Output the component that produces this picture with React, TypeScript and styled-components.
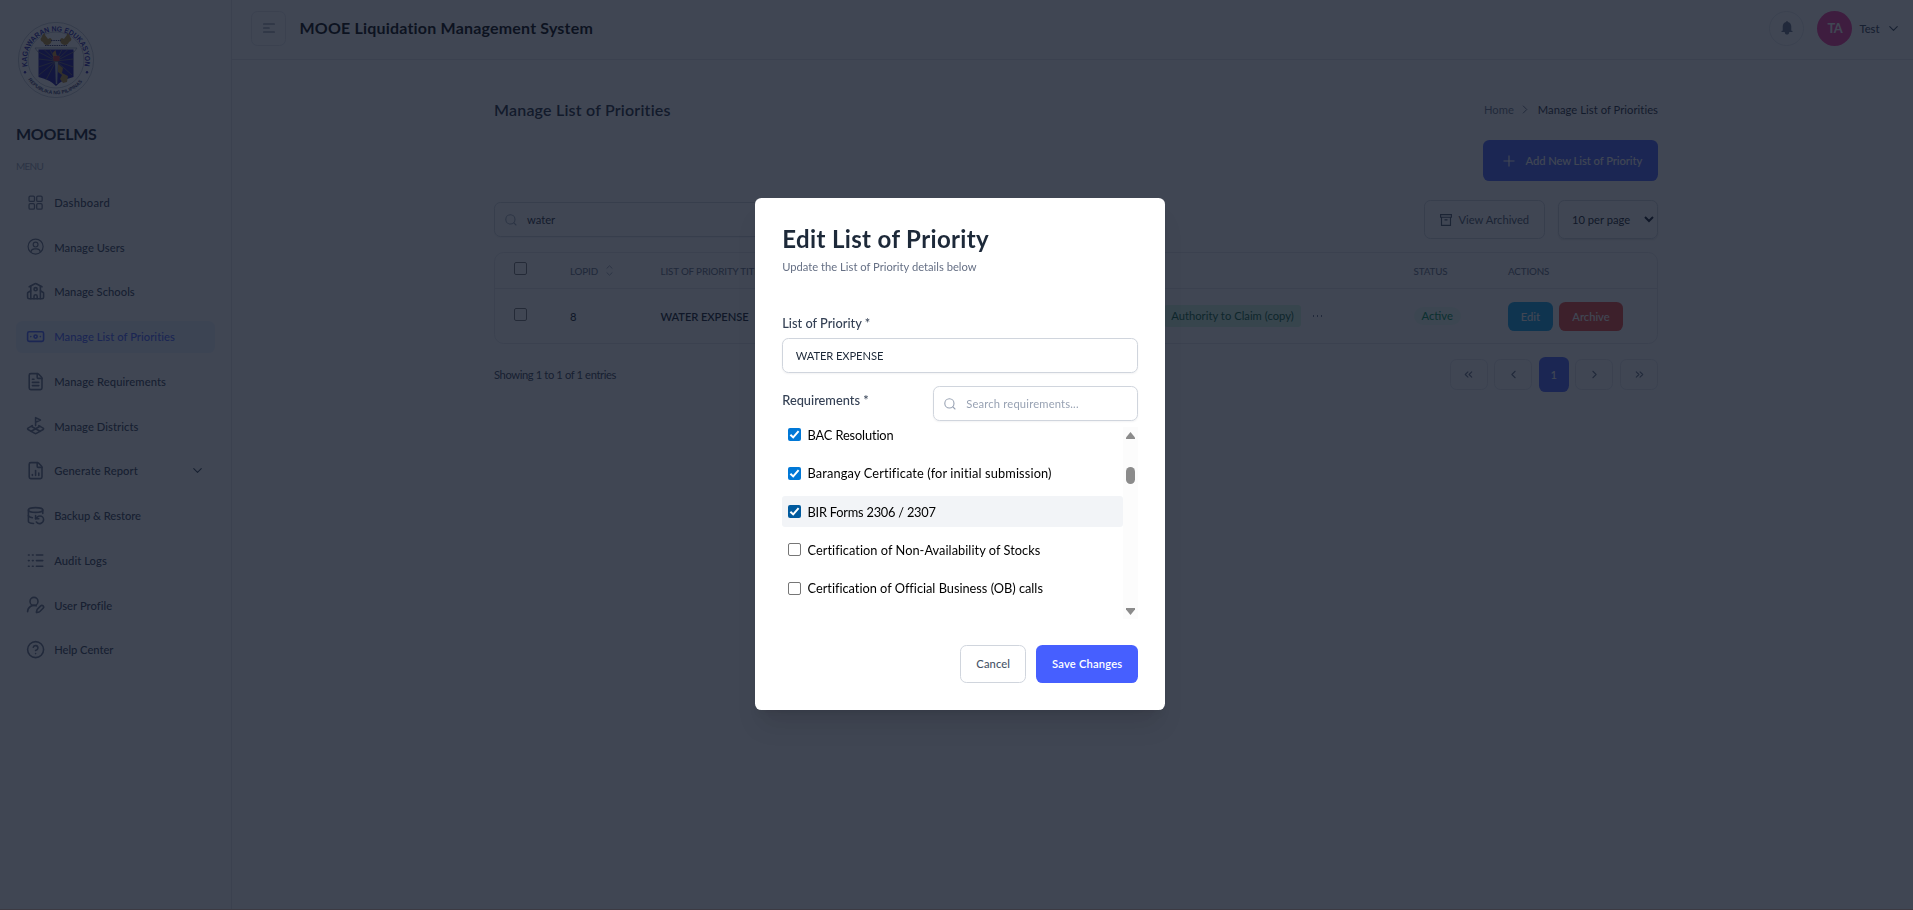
import React from 'react';
import styled, { createGlobalStyle } from 'styled-components';
import {
  Banknote, ChevronDown, ChevronLeft, ChevronRight, ChevronsLeft, ChevronsRight, CircleHelp,
  DatabaseBackup, FileChartColumn, FileText, LandPlot, Logs, School, UserRoundPen,
} from 'lucide-react';

const Global = createGlobalStyle`
  *, *::before, *::after { box-sizing: border-box; }
  body { margin: 0; background: #fff; font-family: Lato, "Liberation Sans", sans-serif; overflow: hidden; }
  h1, h2, p { margin: 0; }
  button { font-family: inherit; cursor: pointer; }
  svg { display: block; flex-shrink: 0; }
`;

const ink = '#101828';
const line = '#e4e7ec';

const Shell = styled.div`
  display: flex;
  height: 910px;
  width: 100%;
`;

/* Sidebar */
const Sidebar = styled.aside`
  width: 232px;
  flex-shrink: 0;
  border-right: 1px solid ${line};
  padding: 20px 16px 0;
`;
const Brand = styled.h2`
  margin-top: 23px;
  font-size: 16px;
  line-height: 22px;
  font-weight: 700;
  letter-spacing: -0.25px;
  color: ${ink};
`;
const MenuLabel = styled.p`
  margin: 13px 0 12.3px;
  font-size: 10px;
  line-height: 16px;
  letter-spacing: -0.75px;
  color: #98a2b3;
`;
const Nav = styled.nav`
  display: flex;
  flex-direction: column;
  gap: 12.75px;
`;
const NavItem = styled.a<{ $active?: boolean }>`
  display: flex;
  align-items: center;
  gap: 9.2px;
  width: 199px;
  height: 32px;
  padding: 0 10.5px 0 9.8px;
  border-radius: 6.4px;
  color: ${p => (p.$active ? '#465fff' : '#344054')};
  background: ${p => (p.$active ? '#ecf3ff' : 'transparent')};
  & > svg:first-child { color: ${p => (p.$active ? '#465fff' : '#667085')}; }
`;
const NavText = styled.span<{ $ls: number }>`
  flex: 1;
  font-size: 11.2px;
  font-weight: 500;
  white-space: nowrap;
  letter-spacing: ${p => p.$ls}px;
`;

/* Header */
const Main = styled.div`
  flex: 1;
  min-width: 0;
`;
const Header = styled.header`
  display: flex;
  align-items: center;
  height: 60px;
  padding: 0 12.5px 3px 19px;
  border-bottom: 1px solid ${line};
`;
const SquareButton = styled.button<{ $round?: boolean }>`
  display: grid;
  place-items: center;
  width: 35px;
  height: 35px;
  padding: 0;
  border: 1px solid ${line};
  border-radius: ${p => (p.$round ? '50%' : '6.4px')};
  background: transparent;
  color: #667085;
`;
const AppTitle = styled.h1`
  flex: 1;
  margin: 0 0 1.5px 13.5px;
  font-size: 16px;
  font-weight: 700;
  letter-spacing: 0.19px;
  color: #000;
`;
const Avatar = styled.div`
  display: grid;
  place-items: center;
  width: 35px;
  height: 35px;
  margin: 0 7px 0 13px;
  border-radius: 50%;
  background: #f6339a;
  color: #fff;
  font-size: 12.8px;
  font-weight: 700;
  letter-spacing: -0.4px;
`;
const UserName = styled.span`
  margin-right: 6px;
  font-size: 11.2px;
  font-weight: 500;
  color: #344054;
`;

/* Page content */
const Content = styled.main`
  width: 1164px;
  margin-left: 262px;
`;
const TitleRow = styled.div`
  display: flex;
  align-items: center;
  justify-content: space-between;
  height: 24px;
  margin-top: 37px;
`;
const PageTitle = styled.h2`
  font-size: 16px;
  font-weight: 600;
  letter-spacing: 0.2px;
  color: #1d2939;
`;
const Crumbs = styled.div`
  display: flex;
  align-items: center;
  font-size: 11.2px;
  color: #667085;
  svg { margin: 1px 10px 0 8px; }
`;
const Current = styled.span`
  color: #1d2939;
  letter-spacing: 0.05px;
`;
const AddRow = styled.div`
  display: flex;
  justify-content: flex-end;
  margin-top: 19px;
`;
const AddButton = styled.button`
  display: flex;
  align-items: center;
  gap: 10.5px;
  width: 175px;
  height: 41px;
  padding: 0 0 0 20px;
  border: 0;
  border-radius: 6.4px;
  background: #465fff;
  color: #fff;
  font-size: 11.2px;
  font-weight: 500;
  white-space: nowrap;
  letter-spacing: -0.06px;
`;
const Toolbar = styled.div`
  display: flex;
  align-items: center;
  height: 39px;
  margin-top: 19px;
`;
const SearchBox = styled.div<{ $w: number }>`
  display: flex;
  align-items: center;
  gap: 10.5px;
  width: ${p => p.$w}px;
  height: 35px;
  padding: 0 9.5px;
  border: 1px solid #d0d5dd;
  border-radius: 6.4px;
  font-size: 11.2px;
  color: #1d2939;
  box-shadow: 0 1px 2px rgba(16, 24, 40, 0.05);
  svg { color: #98a2b3; }
`;
const Placeholder = styled.span`
  color: #98a2b3;
  letter-spacing: 0.18px;
`;
const ArchivedButton = styled.button`
  display: flex;
  align-items: center;
  gap: 7px;
  width: 121.5px;
  height: 38.5px;
  margin-left: auto;
  padding: 0 0 0 15px;
  border: 1px solid #d0d5dd;
  border-radius: 6.4px;
  background: transparent;
  color: #475467;
  font-size: 11.2px;
`;
const PageSize = styled.div`
  display: flex;
  align-items: center;
  justify-content: space-between;
  width: 100px;
  height: 39px;
  margin-left: 13px;
  padding: 0 3px 0 13px;
  border: 1px solid #d0d5dd;
  border-radius: 6.4px;
  box-shadow: 0 1px 2px rgba(0, 0, 0, 0.12);
  font-size: 11.2px;
  color: ${ink};
`;

/* Table */
const Table = styled.section`
  margin-top: 13px;
  height: 92px;
  border: 1px solid ${line};
  border-radius: 9.6px;
`;
const Row = styled.div<{ $head?: boolean }>`
  display: grid;
  grid-template-columns: 56px 90.5px 250px 1fr 94.5px 149px;
  align-items: center;
  height: ${p => (p.$head ? 36 : 54)}px;
  padding-left: 19px;
  border-bottom: ${p => (p.$head ? `1px solid ${line}` : '0')};
  font-size: ${p => (p.$head ? 9.8 : 11.2)}px;
  font-weight: 500;
  letter-spacing: ${p => (p.$head ? -0.15 : 0)}px;
  color: ${p => (p.$head ? '#667085' : ink)};
`;
const Cell = styled.div<{ $end?: boolean; $gap?: number }>`
  display: flex;
  align-items: center;
  gap: ${p => p.$gap ?? 0}px;
  justify-content: ${p => (p.$end ? 'flex-end' : 'flex-start')};
`;
const TitleCell = styled(Cell)`
  font-weight: 600;
  letter-spacing: -0.1px;
`;
const Tick = styled.span<{ $on?: boolean; $dark?: boolean }>`
  display: grid;
  place-items: center;
  width: 13px;
  height: 13px;
  flex-shrink: 0;
  border: ${p => (p.$on ? '0' : '1px solid #767676')};
  border-radius: 2px;
  background: ${p => (p.$on ? (p.$dark ? '#005a9e' : '#0078d7') : '#fff')};
`;
const RowTick = styled(Tick)<{ $up: number }>`
  margin-bottom: ${p => p.$up}px;
`;
const Badge = styled.span`
  height: 21.5px;
  padding: 0 6.7px;
  border-radius: 3.2px;
  background: #d1fadf;
  color: #05603a;
  font-weight: 400;
  line-height: 22px;
  letter-spacing: 0.03px;
`;
const More = styled.span`
  display: flex;
  gap: 2.4px;
  width: 113px;
  padding-left: 12.5px;
  i { width: 1.4px; height: 1.2px; background: #667085; }
`;
const Status = styled.span`
  height: 18px;
  padding: 0 8px;
  border-radius: 9px;
  background: #ecfdf3;
  color: #039855;
  line-height: 18px;
`;
const Action = styled.button<{ $red?: boolean }>`
  width: ${p => (p.$red ? 64 : 45)}px;
  height: 29px;
  padding: 0;
  border: 0;
  border-radius: 6.4px;
  background: ${p => (p.$red ? '#f04438' : '#0ba5ec')};
  color: #fff;
  font-size: 11.2px;
  font-weight: 500;
`;
const Footer = styled.div`
  display: flex;
  align-items: center;
  justify-content: space-between;
  height: 35px;
  margin-top: 13px;
`;
const Showing = styled.span`
  font-size: 11.2px;
  letter-spacing: -0.39px;
  color: #344054;
`;
const Pager = styled.div`
  display: flex;
  align-items: center;
  gap: 6.6px;
`;
const PageButton = styled.button<{ $current?: boolean }>`
  display: grid;
  place-items: center;
  width: ${p => (p.$current ? 30 : 38)}px;
  height: ${p => (p.$current ? 35 : 31.5)}px;
  padding: 0;
  border: ${p => (p.$current ? '0' : `1px solid ${line}`)};
  border-radius: 6.4px;
  background: ${p => (p.$current ? '#465fff' : 'transparent')};
  color: ${p => (p.$current ? '#fff' : '#667085')};
  font-size: 11.2px;
  font-weight: 500;
`;

/* Modal */
const Overlay = styled.div`
  position: fixed;
  inset: 0;
  display: flex;
  align-items: center;
  justify-content: center;
  padding: 0 0 1px 7.5px;
  background: rgba(16, 24, 40, 0.8);
  border-bottom: 1px solid #3c3a42;
`;
const Dialog = styled.div`
  width: 410px;
  height: 512px;
  padding: 26px 27px 0;
  border-radius: 6.4px;
  background: #fff;
  box-shadow: 0 20px 25px -5px rgba(0, 0, 0, 0.1), 0 8px 10px -6px rgba(0, 0, 0, 0.1);
`;
const DialogTitle = styled.h2`
  font-size: 24px;
  line-height: 30px;
  font-weight: 700;
  letter-spacing: 0.36px;
  color: #1d2939;
`;
const DialogNote = styled.p`
  margin-top: 4.5px;
  font-size: 11.2px;
  line-height: 16px;
  color: #667085;
`;
const Label = styled.label`
  display: block;
  font-size: 12.8px;
  line-height: 19px;
  font-weight: 500;
  color: #344054;
`;
const FieldLabel = styled(Label)`
  margin-top: 39.5px;
`;
const Field = styled.div`
  height: 35px;
  margin-top: 5px;
  padding-left: 12.5px;
  border: 1px solid #d0d5dd;
  border-radius: 6.4px;
  box-shadow: 0 1px 2px rgba(16, 24, 40, 0.05);
  font-size: 11.2px;
  line-height: 33px;
  letter-spacing: -0.1px;
  color: #1d2939;
`;
const ReqHead = styled.div`
  display: flex;
  align-items: flex-start;
  justify-content: space-between;
  margin-top: 13px;
  ${Label} { margin-top: 5px; }
`;
const List = styled.div`
  display: flex;
  height: 192px;
  margin-top: 6px;
  overflow: hidden;
`;
const Options = styled.div`
  flex: 1;
  display: flex;
  flex-direction: column;
  gap: 6.4px;
  margin-top: -8px;
`;
const Option = styled.label<{ $hover?: boolean; $ls: number }>`
  display: flex;
  align-items: center;
  gap: 6.3px;
  flex: 0 0 31.9px;
  padding-left: 6px;
  border-radius: 3.2px;
  background: ${p => (p.$hover ? '#f2f4f7' : 'transparent')};
  color: #000;
  font-size: 12.8px;
  white-space: nowrap;
  letter-spacing: ${p => p.$ls}px;
`;
const ScrollTrack = styled.div`
  display: flex;
  flex-direction: column;
  align-items: center;
  width: 15px;
  padding: 5px 0 4px;
  background: #fcfcfc;
`;
const Thumb = styled.div`
  width: 9px;
  height: 17px;
  margin: 28px 0 auto;
  border-radius: 4.5px;
  background: #8b8b8b;
`;
const Buttons = styled.div`
  display: flex;
  justify-content: flex-end;
  gap: 10px;
  margin-top: 25.5px;
`;
const DialogButton = styled.button<{ $primary?: boolean }>`
  width: ${p => (p.$primary ? 102 : 66)}px;
  height: 38px;
  padding: 0;
  border: ${p => (p.$primary ? '0' : '1px solid #d0d5dd')};
  border-radius: 6.4px;
  background: ${p => (p.$primary ? '#465fff' : '#fff')};
  color: ${p => (p.$primary ? '#fff' : '#475467')};
  font-size: 11.2px;
  font-weight: ${p => (p.$primary ? 600 : 500)};
  letter-spacing: ${p => (p.$primary ? 0.18 : 0.1)}px;
`;

const Seal = () => (
  <svg width="80" height="80" viewBox="0 0 80 80">
    <defs>
      <path id="arcTop" d="M11.9 47.5A29 29 0 1 1 68.1 47.5" />
      <path id="arcBottom" d="M10.5 57A33.800 33.800 0 0 0 69.500 57" />
    </defs>
    <circle cx="40" cy="40" r="37.6" fill="none" stroke="#98a2b3" strokeWidth=".6" />
    <circle cx="40" cy="40" r="28" fill="none" stroke="#98a2b3" strokeWidth=".6" />
    <text fontFamily="Liberation Sans" fontWeight="700" fontSize="7.4" fill="#2b1fa8">
      <textPath href="#arcTop" startOffset="1" textLength="103" lengthAdjust="spacingAndGlyphs">KAGAWARAN NG EDUKASYON</textPath>
    </text>
    <text fontFamily="Liberation Sans" fontWeight="700" fontSize="5" fill="#33336b">
      <textPath href="#arcBottom" startOffset="3" textLength="63" lengthAdjust="spacingAndGlyphs">REPUBLIKA NG PILIPINAS</textPath>
    </text>
    <circle cx="9" cy="52.3" r="1.2" fill="#2b1fa8" />
    <circle cx="71" cy="52.3" r="1.2" fill="#2b1fa8" />
    <path d="M29 13c-1 2 2 4 3 6l2-1c3 1 2 4 0 6-3 2-6 1-7-2-3-1-3-4-1-5 0-2 1-3 3-4zM51 13c1 2-2 4-3 6l-2-1c-3 1-2 4 0 6 3 2 6 1 7-2 3-1 3-4 1-5 0-2-1-3-3-4z" fill="#b58a35" />
    <path d="M29 25.500h22M35 20.500h10" stroke="#33336b" strokeWidth="1.2" strokeDasharray="1.5 .8" />
    <path d="M19 28h42l-3 4H22z" fill="none" stroke="#98a2b3" strokeWidth=".9" />
    <path d="M22.500 29.500h35V57q-12 3-17.500 9Q34.500 60 22.500 57z" fill="#1c1399" />
    <path d="M40 41L22.500 32M40 41L28 29.500M40 41L34 29.500M40 41L46 29.500M40 41L52 29.500M40 41L57.500 32M40 41L22.500 39M40 41L22.500 47M40 41L23 55M40 41L30 60M40 41L57.500 39M40 41L57.500 47M40 41L56 55" stroke="#8a8460" strokeWidth=".6" />
    <path d="M39 42h3l-.8 22h-1.400z" fill="#aab2c5" />
    <path d="M42 44l5 4-1 5 6 3-1 6-4 1-3-4 2-4-4-3z" fill="#b58a35" />
    <path d="M36.500 33l3-3 1 5 3 2-1 3-5-1z" fill="#c98a2e" />
    <path d="M37.500 36h6v5h-6z" fill="#c42b2b" />
  </svg>
);

const GridIcon = () => (
  <svg width="19.2" height="19.2" viewBox="0 0 24 24" fill="none" stroke="currentColor" strokeWidth="1.6">
    <rect x="3.8" y="3.8" width="6.800" height="6.800" rx="1.500" /><rect x="13.400" y="3.8" width="6.800" height="6.800" rx="1.500" />
    <rect x="3.8" y="13.400" width="6.800" height="6.800" rx="1.500" /><rect x="13.400" y="13.400" width="6.800" height="6.800" rx="1.500" />
  </svg>
);
const UserIcon = () => (
  <svg width="19.2" height="19.2" viewBox="0 0 24 24" fill="none" stroke="currentColor" strokeWidth="1.5">
    <circle cx="12" cy="12" r="9.400" /><circle cx="12" cy="9.500" r="3" /><path d="M6 18.800c.5-2.700 2.300-4 4.500-4h3c2.200 0 4 1.300 4.500 4" />
  </svg>
);
const SearchIcon = () => (
  <svg width="12" height="12" viewBox="0 0 12 12" fill="none" stroke="currentColor" strokeWidth="1.1" strokeLinecap="round">
    <circle cx="5.400" cy="5.400" r="4.600" /><path d="M8.900 8.900L11 11" />
  </svg>
);
const BellIcon = () => (
  <svg width="12" height="14" viewBox="0 0 12 14" fill="currentColor">
    <path d="M6 0c.6 0 .9.400.900.900C9 1.400 10.300 3.200 10.300 5.400V9.700h.7a.6.6 0 0 1 0 1.300H8.300C8.200 12.600 7.300 13.600 6 13.600S3.800 12.600 3.700 11H1a.6.6 0 0 1 0-1.300h.7V5.400C1.700 3.200 3 1.400 5.100.9 5.100.4 5.400 0 6 0z" />
  </svg>
);
const ArchiveIcon = () => (
  <svg width="12" height="12" viewBox="0 0 12 12" fill="none" stroke="currentColor" strokeWidth="1.150">
    <path d="M.6.600h10.800v2.600H.600zM1.500 3.200v8.200h9V3.200M4.500 5.800h3" />
  </svg>
);
const Check = () => (
  <svg width="11" height="11" viewBox="0 0 11 11" fill="none" stroke="#fff" strokeWidth="2">
    <path d="M1.400 5.700L4.200 8.400L9.600 2.200" />
  </svg>
);
const Arrow = ({ up }: { up?: boolean }) => (
  <svg width="9" height="7" viewBox="0 0 9 7" fill="#8b8b8b">
    <path d={up ? 'M4.500 0L9 5.500V7H0V5.500z' : 'M4.500 7L9 1.500V0H0V1.500z'} />
  </svg>
);

const navItems: { label: string; ls: number; icon: React.ReactNode; active?: boolean; more?: boolean }[] = [
  { label: 'Dashboard', ls: 0.25, icon: <GridIcon /> },
  { label: 'Manage Users', ls: 0.05, icon: <UserIcon /> },
  { label: 'Manage Schools', ls: 0.03, icon: <School size={19.2} /> },
  { label: 'Manage List of Priorities', ls: 0.05, icon: <Banknote size={19.2} />, active: true },
  { label: 'Manage Requirements', ls: 0.09, icon: <FileText size={19.2} /> },
  { label: 'Manage Districts', ls: 0.06, icon: <LandPlot size={19.2} /> },
  { label: 'Generate Report', ls: 0.13, icon: <FileChartColumn size={19.2} />, more: true },
  { label: 'Backup & Restore', ls: -0.06, icon: <DatabaseBackup size={19.2} /> },
  { label: 'Audit Logs', ls: 0.06, icon: <Logs size={19.2} /> },
  { label: 'User Profile', ls: 0.05, icon: <UserRoundPen size={19.2} /> },
  { label: 'Help Center', ls: -0.04, icon: <CircleHelp size={19.2} /> },
];

const options = [
  { label: 'BAC Resolution', ls: -0.13, on: true },
  { label: 'Barangay Certificate (for initial submission)', ls: 0.13, on: true },
  { label: 'BIR Forms 2306 / 2307', ls: -0.22, on: true, hover: true },
  { label: 'Certification of Non-Availability of Stocks', ls: 0.035 },
  { label: 'Certification of Official Business (OB) calls', ls: -0.015 },
];

export default function App() {
  return (
    <>
      <Global />
      <Shell>
        <Sidebar>
          <Seal />
          <Brand>MOOELMS</Brand>
          <MenuLabel>MENU</MenuLabel>
          <Nav>
            {navItems.map(item => (
              <NavItem key={item.label} $active={item.active}>
                {item.icon}
                <NavText $ls={item.ls}>{item.label}</NavText>
                {item.more && <ChevronDown size={15} strokeWidth={1.8} />}
              </NavItem>
            ))}
          </Nav>
        </Sidebar>
        <Main>
          <Header>
            <SquareButton>
              <svg width="12" height="10" viewBox="0 0 12 10" fill="none" stroke="currentColor" strokeWidth="1.200" strokeLinecap="round">
                <path d="M.6 1h10.800M.600 5h5.600M.600 9h10.800" />
              </svg>
            </SquareButton>
            <AppTitle>MOOE Liquidation Management System</AppTitle>
            <SquareButton $round><BellIcon /></SquareButton>
            <Avatar>TA</Avatar>
            <UserName>Test</UserName>
            <ChevronDown size={15} strokeWidth={1.8} color="#344054" />
          </Header>
          <Content>
            <TitleRow>
              <PageTitle>Manage List of Priorities</PageTitle>
              <Crumbs>
                Home
                <svg width="6" height="9" viewBox="0 0 6 9" fill="none" stroke="currentColor"><path d="M1 .7L4.800 4.500L1 8.300" /></svg>
                <Current>Manage List of Priorities</Current>
              </Crumbs>
            </TitleRow>
            <AddRow>
              <AddButton>
                <svg width="12" height="12" viewBox="0 0 12 12" stroke="currentColor" strokeWidth="1.200"><path d="M6 .5v11M.5 6h11" /></svg>
                Add New List of Priority
              </AddButton>
            </AddRow>
            <Toolbar>
              <SearchBox $w={307}><SearchIcon />water</SearchBox>
              <ArchivedButton><ArchiveIcon />View Archived</ArchivedButton>
              <PageSize>
                10 per page
                <svg width="10" height="7" viewBox="0 0 10 7" fill="none" stroke="currentColor" strokeWidth="2"><path d="M1 1l4 4 4-4" /></svg>
              </PageSize>
            </Toolbar>
            <Table>
              <Row $head>
                <Cell><RowTick $up={5} /></Cell>
                <Cell $gap={8}>
                  LOPID
                  <svg width="7" height="11" viewBox="0 0 7 11" fill="none" stroke="#98a2b3"><path d="M.6 3.600L3.500.800L6.400 3.600M.600 7.400L3.500 10.200L6.400 7.400" /></svg>
                </Cell>
                <Cell>LIST OF PRIORITY TITLE</Cell>
                <Cell />
                <Cell>STATUS</Cell>
                <Cell>ACTIONS</Cell>
              </Row>
              <Row>
                <Cell><RowTick $up={3} /></Cell>
                <Cell>8</Cell>
                <TitleCell>WATER EXPENSE</TitleCell>
                <Cell $end>
                  <Badge>Authority to Claim (copy)</Badge>
                  <More><i /><i /><i /></More>
                </Cell>
                <Cell><Status>Active</Status></Cell>
                <Cell $gap={6}>
                  <Action>Edit</Action>
                  <Action $red>Archive</Action>
                </Cell>
              </Row>
            </Table>
            <Footer>
              <Showing>Showing 1 to 1 of 1 entries</Showing>
              <Pager>
                <PageButton><ChevronsLeft size={13} /></PageButton>
                <PageButton><ChevronLeft size={13} /></PageButton>
                <PageButton $current>1</PageButton>
                <PageButton><ChevronRight size={13} /></PageButton>
                <PageButton><ChevronsRight size={13} /></PageButton>
              </Pager>
            </Footer>
          </Content>
        </Main>
      </Shell>
      <Overlay>
        <Dialog role="dialog">
          <DialogTitle>Edit List of Priority</DialogTitle>
          <DialogNote>Update the List of Priority details below</DialogNote>
          <FieldLabel>List of Priority *</FieldLabel>
          <Field>WATER EXPENSE</Field>
          <ReqHead>
            <Label>Requirements *</Label>
            <SearchBox $w={205}><SearchIcon /><Placeholder>Search requirements...</Placeholder></SearchBox>
          </ReqHead>
          <List>
            <Options>
              {options.map(o => (
                <Option key={o.label} $hover={o.hover} $ls={o.ls}>
                  <Tick $on={o.on} $dark={o.hover}>{o.on && <Check />}</Tick>
                  {o.label}
                </Option>
              ))}
            </Options>
            <ScrollTrack>
              <Arrow up />
              <Thumb />
              <Arrow />
            </ScrollTrack>
          </List>
          <Buttons>
            <DialogButton>Cancel</DialogButton>
            <DialogButton $primary>Save Changes</DialogButton>
          </Buttons>
        </Dialog>
      </Overlay>
    </>
  );
}
